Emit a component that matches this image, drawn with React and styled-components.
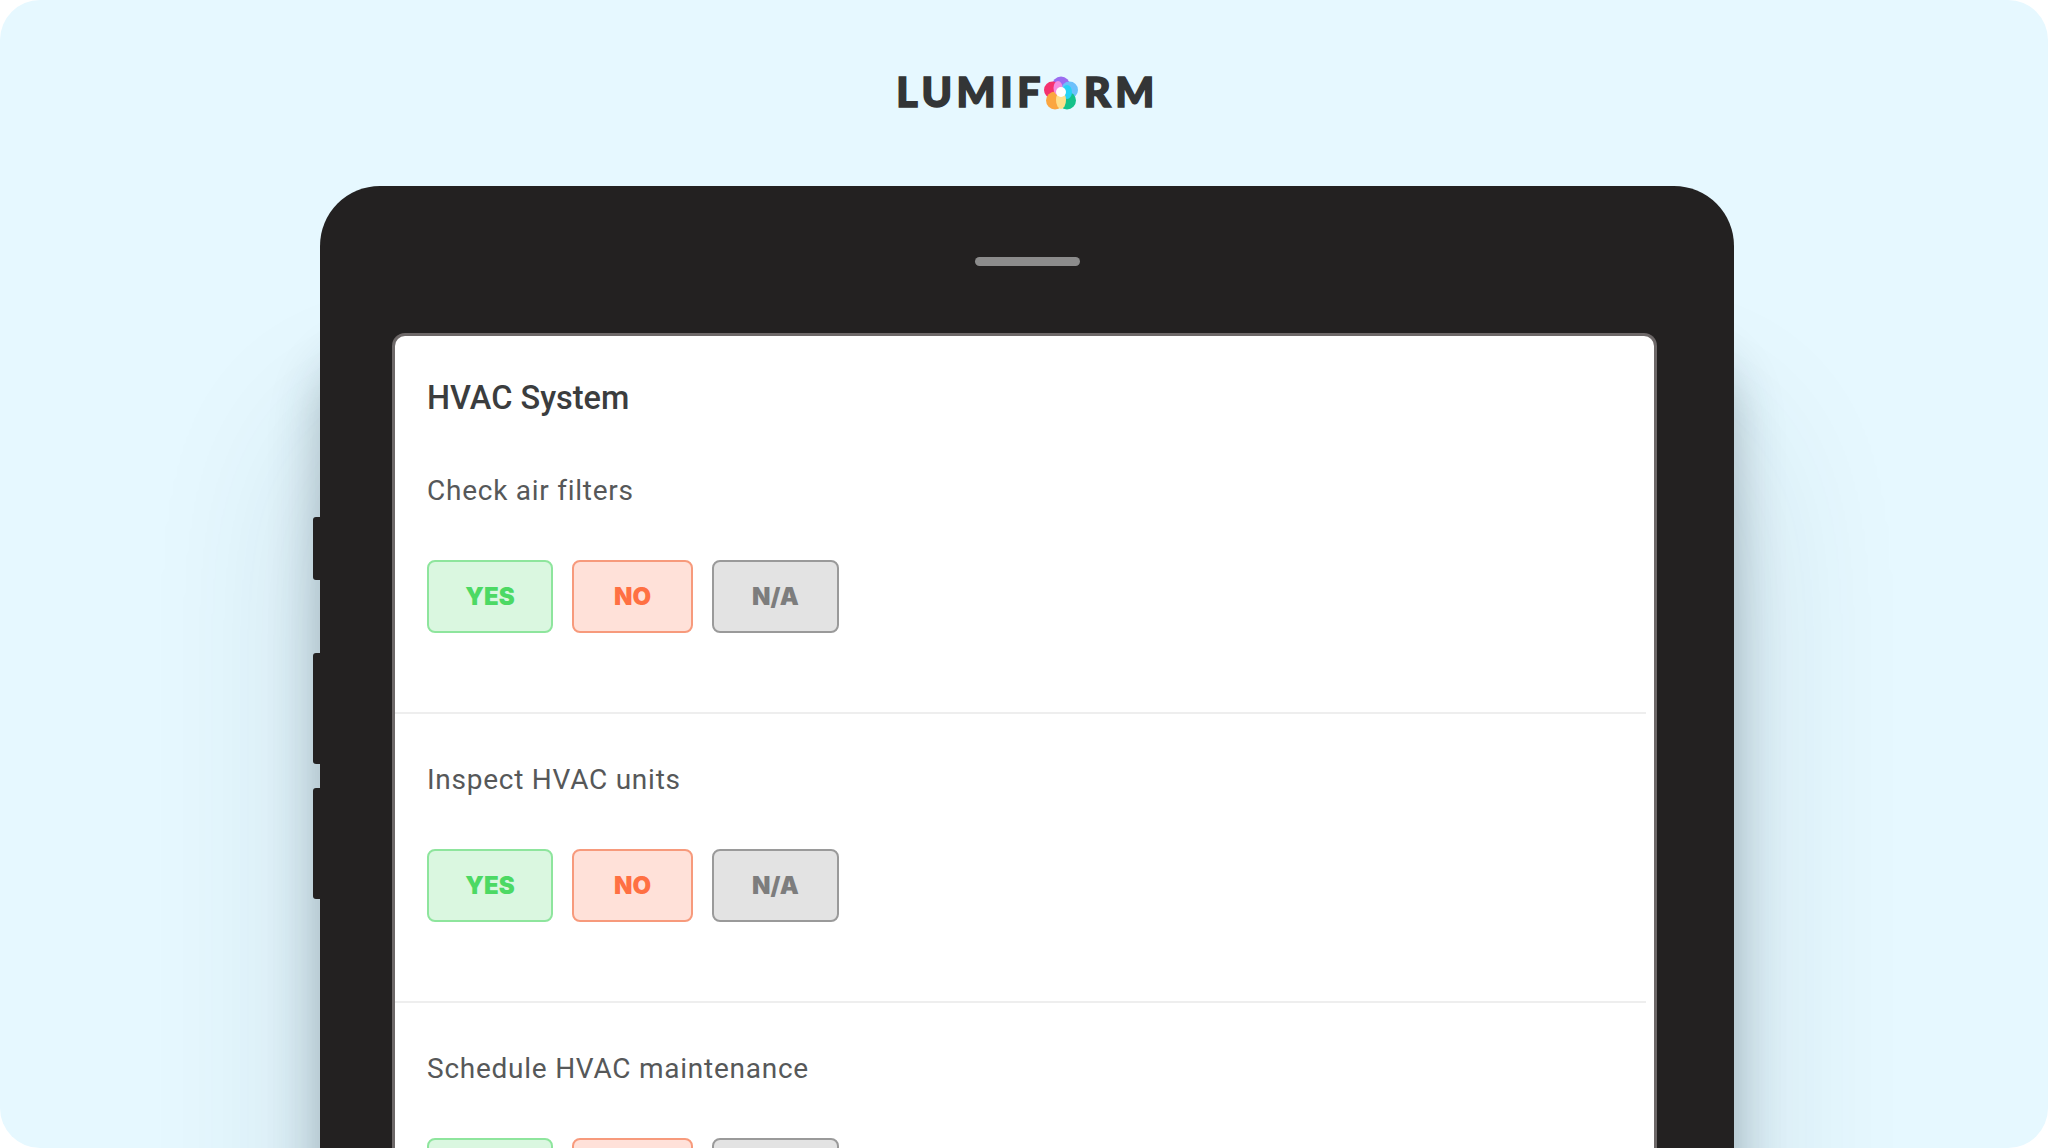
import React from "react";
import styled, { createGlobalStyle } from "styled-components";

const Global = createGlobalStyle`
  html, body { margin: 0; padding: 0; background: #fff; }
  #root { width: 2048px; height: 1148px; }
`;

const Page = styled.div`
  width: 2048px;
  height: 1148px;
  overflow: hidden;
  border-radius: 40px;
  background: #e6f8ff;
  display: flex;
  flex-direction: column;
  align-items: center;
  font-family: Roboto, Inter, "Liberation Sans", sans-serif;
`;

const Logo = styled.div`
  height: 186px;
  flex: none;
  padding-top: 70px;
  box-sizing: border-box;
  display: flex;
  align-items: flex-start;
  justify-content: center;
  margin-left: 7px;
`;

const LogoText = styled.span`
  font-family: Lato, Inter, sans-serif;
  font-weight: 900;
  font-size: 41px;
  line-height: 44px;
  letter-spacing: 4.6px;
  color: #333536;
  -webkit-text-stroke: 1.6px #333536;
`;

const LogoMark = styled.svg`
  width: 34px;
  height: 34px;
  margin: 6px 6px 0 -1px;
  flex: none;
`;

const Device = styled.div`
  position: relative;
  flex: none;
  width: 1414px;
  height: 1200px;
  margin-left: 6px;
  box-sizing: border-box;
  background: #232121;
  border-radius: 60px 60px 0 0;
  padding: 147px 77px 0 72px;
  box-shadow:
    0 170px 50px rgba(30, 50, 60, 0.3),
    0 250px 170px rgba(30, 60, 75, 0.16);
`;

const Notch = styled.div`
  position: absolute;
  top: 71px;
  left: 655px;
  width: 105px;
  height: 9px;
  border-radius: 5px;
  background: #8c8c8c;
`;

const SideKey = styled.div`
  position: absolute;
  left: -7px;
  top: ${(p) => p.$top}px;
  width: 7px;
  height: ${(p) => p.$height}px;
  background: #232121;
  border-radius: 3px 0 0 3px;
`;

const Screen = styled.div`
  box-sizing: border-box;
  height: 1000px;
  background: #fff;
  border: 3px solid #6d6868;
  border-bottom: 0;
  border-radius: 13px 13px 0 0;
`;

const Title = styled.h1`
  margin: 0;
  padding: 44px 0 0 32px;
  font-size: 32.5px;
  line-height: 36px;
  font-weight: 500;
  color: #3b3d3e;
`;

const Item = styled.section`
  box-sizing: border-box;
  padding: ${(p) => (p.$first ? "58px" : "49px")} 0 79px 32px;
  margin-right: 8px;
  border-bottom: 2px solid #eeeeee;
`;

const Question = styled.div`
  font-size: 28px;
  line-height: 34px;
  letter-spacing: 0.75px;
  color: #565859;
  margin-bottom: 52px;
`;

const Choices = styled.div`
  display: flex;
  gap: 19px;
`;

const Choice = styled.button`
  box-sizing: border-box;
  height: 73px;
  width: ${(p) => p.$w}px;
  border-radius: 8px;
  border: 2px solid ${(p) => p.$border};
  background: ${(p) => p.$bg};
  color: ${(p) => p.$color};
  font-family: Inter, sans-serif;
  font-weight: 900;
  font-size: 24px;
  padding: 0;
  display: flex;
  align-items: center;
  justify-content: center;
`;

const items = ["Check air filters", "Inspect HVAC units", "Schedule HVAC maintenance"];

const Flower = () => (
  <LogoMark viewBox="0 0 34 34">
    <circle cx="17" cy="9.5" r="9" fill="#9b6cf0" />
    <circle cx="25.5" cy="14" r="8.5" fill="#6cc0fb" />
    <circle cx="8.5" cy="14" r="8.5" fill="#f4326f" />
    <circle cx="23" cy="24.5" r="9" fill="#14c28a" />
    <circle cx="11" cy="24.5" r="9" fill="#fba640" />
    <ellipse cx="14" cy="12" rx="4.5" ry="7" fill="#f58be0" />
    <ellipse cx="23" cy="16" rx="5" ry="7" fill="#27d3f5" />
    <ellipse cx="17" cy="24" rx="5" ry="9" fill="#ffe08a" />
    <circle cx="17" cy="16" r="5" fill="#ffffff" />
  </LogoMark>
);

export default function App() {
  return (
    <Page>
      <Global />
      <Logo>
        <LogoText>LUMIF</LogoText>
        <Flower />
        <LogoText>RM</LogoText>
      </Logo>
      <Device>
        <Notch />
        <SideKey $top={331} $height={63} />
        <SideKey $top={467} $height={111} />
        <SideKey $top={602} $height={111} />
        <Screen>
          <Title>HVAC System</Title>
          {items.map((q, i) => (
            <Item key={q} $first={i === 0}>
              <Question>{q}</Question>
              <Choices>
                <Choice $w={126} $border="#8ee59d" $bg="#daf7e0" $color="#4cd964">YES</Choice>
                <Choice $w={121} $border="#f79a7c" $bg="#ffe1d9" $color="#ff7043">NO</Choice>
                <Choice $w={127} $border="#9a9a9a" $bg="#e3e3e3" $color="#7d7d7d">N/A</Choice>
              </Choices>
            </Item>
          ))}
        </Screen>
      </Device>
    </Page>
  );
}
